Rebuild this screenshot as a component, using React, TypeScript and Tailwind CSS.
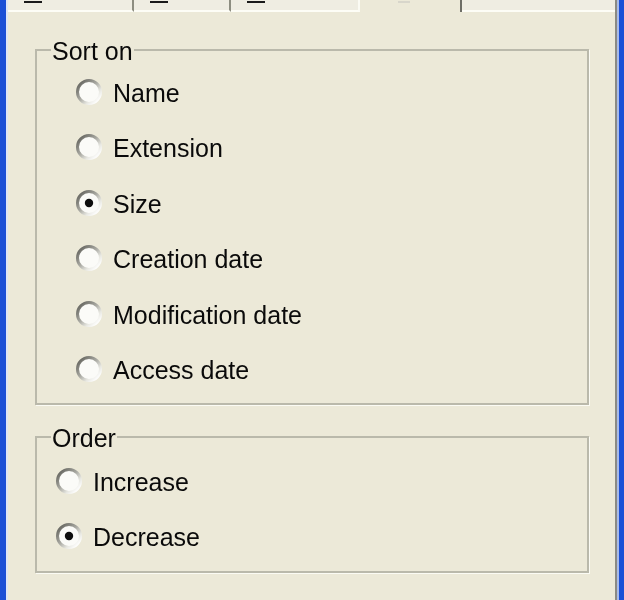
import React from "react";

const Radio = ({ checked }: { checked?: boolean }) => (
  <svg width="28" height="28" viewBox="0 0 28 28" className="shrink-0">
    <defs>
      <linearGradient id="rgRing" x1="0.1" y1="0.1" x2="0.9" y2="0.9">
        <stop offset="0" stopColor="#6a6a64" />
        <stop offset="0.45" stopColor="#a9a9a2" />
        <stop offset="0.75" stopColor="#e8e8e2" />
        <stop offset="1" stopColor="#ffffff" />
      </linearGradient>
    </defs>
    <circle cx="14" cy="14" r="11.5" fill="#fbfbf8" stroke="url(#rgRing)" strokeWidth="3" />
    {checked && <circle cx="14" cy="14" r="4.2" fill="#0e0e0e" />}
  </svg>
);

const Row = ({ label, checked }: { label: string; checked?: boolean }) => (
  <div className="flex items-center h-[28px] gap-[10px]">
    <Radio checked={checked} />
    <span className="text-[25px] leading-[30px] text-[#0a0a0a] inline-block scale-y-[1.06]">{label}</span>
  </div>
);

const Tab = ({ w, border, mark }: { w: string; border: string; mark?: boolean }) => (
  <div className={`${w} ${border} h-full border-b-2 border-b-[#fdfdf6] bg-[#efede2] flex flex-col`}>
    <div className="h-[1px]" />
    {mark && <div className="ml-[16px] w-[18px] h-[2px] bg-[#1a1a1a]" />}
  </div>
);

export default function App() {
  return (
    <div
      className="w-[624px] h-[600px] flex bg-[#ece9d8] overflow-hidden blur-[0.4px]"
      style={{ fontFamily: '"Liberation Sans", Arial, sans-serif' }}
    >
      <div className="w-[6px] bg-[#1b4fd6]" />
      <div className="w-[2px] bg-[#dfe6f5]" />
      <div className="flex-1 flex flex-col">
        {/* tab strip */}
        <div className="h-[12px] flex">
          <Tab w="w-[126px]" border="border-r-2 border-r-[#8d8d80]" mark />
          <Tab w="w-[97px]" border="border-r-2 border-r-[#8d8d80]" mark />
          <Tab w="w-[129px]" border="border-r-2 border-r-[#fbfbf4]" mark />
          <div className="w-[102px] h-full border-r-2 border-r-[#6e6e66] bg-[#ece9d8] flex flex-col">
            <div className="h-[1px]" />
            <div className="ml-[38px] w-[12px] h-[2px] bg-[#d8d6cb]" />
          </div>
          <div className="flex-1 h-full border-b-2 border-b-[#fdfdf6] bg-[#efede2]" />
        </div>

        {/* page */}
        <div className="flex-1 pl-[27px] pr-[26px]">
          <fieldset className="mt-[23px] w-[554px] border-2 border-[#bab9ab] shadow-[1px_1px_0_#fbfbf4] p-0 m-0">
            <legend className="ml-[14px] px-[1px] text-[25px] leading-[30px] text-[#0a0a0a]">
              <span className="inline-block scale-y-[1.06]">Sort on</span>
            </legend>
            <div className="pl-[38px] pt-[13px] pb-[20px] flex flex-col gap-[27.4px]">
              <Row label="Name" />
              <Row label="Extension" />
              <Row label="Size" checked />
              <Row label="Creation date" />
              <Row label="Modification date" />
              <Row label="Access date" />
            </div>
          </fieldset>

          <fieldset className="mt-[17px] w-[554px] border-2 border-[#bab9ab] shadow-[1px_1px_0_#fbfbf4] p-0 m-0">
            <legend className="ml-[14px] px-[1px] text-[25px] leading-[30px] text-[#0a0a0a]">
              <span className="inline-block scale-y-[1.06]">Order</span>
            </legend>
            <div className="pl-[18px] pt-[15px] pb-[21px] flex flex-col gap-[27px]">
              <Row label="Increase" />
              <Row label="Decrease" checked />
            </div>
          </fieldset>
        </div>
      </div>
      <div className="w-[2px] bg-[#8a8a84]" />
      <div className="w-[2px] bg-[#a9bbe8]" />
      <div className="w-[5px] bg-[#1b4fd6]" />
    </div>
  );
}
